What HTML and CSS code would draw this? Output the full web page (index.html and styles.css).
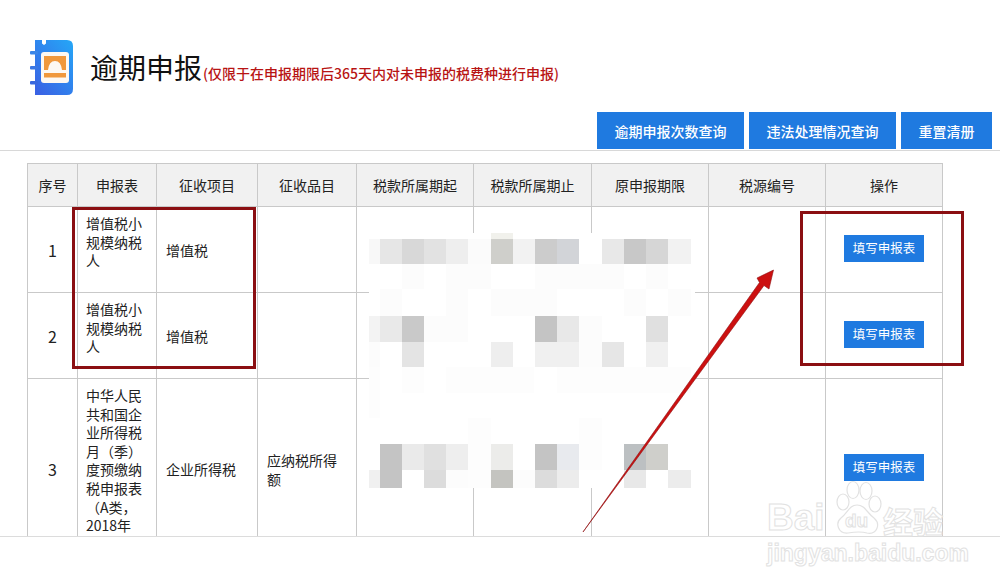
FILE: index.html
```html
<!DOCTYPE html>
<html lang="zh-CN">
<head>
<meta charset="utf-8">
<title>逾期申报</title>
<link rel="stylesheet" href="styles.css">
</head>
<body>
<div class="page">
  <header class="head">
    <svg class="logo" viewBox="0 0 46 60" width="46" height="60" aria-hidden="true">
      <defs>
        <linearGradient id="bookFill" x1="0.9" y1="0" x2="0.1" y2="1">
          <stop offset="0" stop-color="#26a4f6"/>
          <stop offset="1" stop-color="#3a62e4"/>
        </linearGradient>
      </defs>
      <path d="M5 2h7v3.500l2 1.500 2-1.500v-3.500h21q6 0 6 6v43q0 6-6 6h-32z" fill="url(#bookFill)"/>
      <rect x="0" y="13" width="8" height="3.500" rx="1" fill="#3b86e8"/>
      <rect x="0" y="28" width="8" height="3.500" rx="1" fill="#3b78e4"/>
      <rect x="0" y="43" width="8" height="3.500" rx="1" fill="#3a68de"/>
      <rect x="11" y="14" width="28" height="31" rx="3" fill="#fdf8f2"/>
      <path d="M14 18h22v14h-4q-1-9-7-9t-7 9h-4z" fill="#f0983c"/>
      <rect x="14" y="35" width="22" height="4.500" fill="#f0983c"/>
    </svg>
    <h1 class="title">逾期申报</h1>
    <span class="note">(仅限于在申报期限后365天内对未申报的税费种进行申报)</span>
  </header>

  <nav class="tools">
    <button class="tool tool-a">逾期申报次数查询</button>
    <button class="tool tool-a">违法处理情况查询</button>
    <button class="tool tool-b">重置清册</button>
  </nav>

  <main class="sheet">
    <table class="grid">
      <colgroup>
        <col class="c1"><col class="c2"><col class="c3"><col class="c4"><col class="c5"><col class="c6"><col class="c7"><col class="c8"><col class="c9">
      </colgroup>
      <thead>
        <tr>
          <th>序号</th><th>申报表</th><th>征收项目</th><th>征收品目</th><th>税款所属期起</th><th>税款所属期止</th><th>原申报期限</th><th>税源编号</th><th>操作</th>
        </tr>
      </thead>
      <tbody>
        <tr class="row-short">
          <td class="mid num">1</td>
          <td class="form">增值税小规模纳税人</td>
          <td>增值税</td><td></td><td></td><td></td><td></td><td></td>
          <td class="mid"><a class="fill">填写申报表</a></td>
        </tr>
        <tr class="row-short">
          <td class="mid num">2</td>
          <td class="form">增值税小规模纳税人</td>
          <td>增值税</td><td></td><td></td><td></td><td></td><td></td>
          <td class="mid"><a class="fill">填写申报表</a></td>
        </tr>
        <tr class="row-long">
          <td class="mid num">3</td>
          <td class="form">中华人民共和国企业所得税月（季）度预缴纳税申报表（A类，<br>2018年</td>
          <td>企业所得税</td><td>应纳税所得额</td><td></td><td></td><td></td><td></td>
          <td class="mid"><a class="fill">填写申报表</a></td>
        </tr>
      </tbody>
    </table>
  </main>
  <footer class="foot"></footer>

  <svg class="mosaic" viewBox="369 233 326 255" width="326" height="255" shape-rendering="crispEdges" aria-hidden="true">
    <rect x="369" y="233" width="326" height="255" fill="#fff"/>
    <rect x="491" y="233" width="22" height="6" fill="#f1f1ec"/>
    <g>
      <rect x="369" y="239" width="11" height="25" fill="#f8f8f8"/><rect x="380" y="239" width="22" height="25" fill="#e6e6e6"/><rect x="402" y="239" width="22" height="25" fill="#d8d8d8"/><rect x="424" y="239" width="22" height="25" fill="#e2e2e2"/><rect x="446" y="239" width="22" height="25" fill="#eeeeee"/><rect x="468" y="239" width="23" height="25" fill="#fbfbfb"/><rect x="491" y="239" width="22" height="25" fill="#cfcfcb"/><rect x="513" y="239" width="22" height="25" fill="#f2f2f2"/><rect x="535" y="239" width="22" height="25" fill="#cccccc"/><rect x="557" y="239" width="22" height="25" fill="#d2d4d8"/><rect x="602" y="239" width="22" height="25" fill="#e8e8e8"/><rect x="624" y="239" width="22" height="25" fill="#c8c8c8"/><rect x="646" y="239" width="22" height="25" fill="#d6d6d6"/><rect x="668" y="239" width="23" height="25" fill="#f2f2f2"/>
    </g>
    <g fill="#fcfcfc">
      <rect x="402" y="264" width="22" height="25"/><rect x="446" y="264" width="45" height="25"/><rect x="535" y="264" width="89" height="25"/><rect x="646" y="264" width="22" height="25"/>
      <rect x="380" y="289" width="22" height="27"/><rect x="446" y="289" width="22" height="27"/><rect x="491" y="289" width="66" height="27"/><rect x="624" y="289" width="22" height="27"/><rect x="668" y="289" width="23" height="27"/>
    </g>
    <g>
      <rect x="369" y="316" width="11" height="26" fill="#f3f3f3"/><rect x="380" y="316" width="22" height="26" fill="#e9e9e9"/><rect x="402" y="316" width="22" height="26" fill="#c9c9c9"/><rect x="424" y="316" width="44" height="26" fill="#fcfcfc"/><rect x="535" y="316" width="22" height="26" fill="#c4c4c4"/><rect x="557" y="316" width="22" height="26" fill="#e8e8e8"/><rect x="579" y="316" width="23" height="26" fill="#fcfcfc"/><rect x="646" y="316" width="22" height="26" fill="#e0e0e0"/>
      <rect x="369" y="342" width="11" height="25" fill="#fcfcfc"/><rect x="402" y="342" width="22" height="25" fill="#e4e4e4"/><rect x="491" y="342" width="22" height="25" fill="#eeeeee"/><rect x="535" y="342" width="44" height="25" fill="#f0f0f0"/><rect x="579" y="342" width="23" height="25" fill="#fcfcfc"/><rect x="602" y="342" width="22" height="25" fill="#e6e6e6"/><rect x="646" y="342" width="22" height="25" fill="#f0f0f0"/>
    </g>
    <g fill="#fdfdfd">
      <rect x="369" y="367" width="11" height="51"/><rect x="402" y="367" width="22" height="26"/><rect x="446" y="367" width="88" height="26"/><rect x="557" y="367" width="134" height="26"/>
      <rect x="468" y="418" width="23" height="70"/><rect x="579" y="418" width="23" height="52"/>
    </g>
    <g>
      <rect x="380" y="444" width="22" height="26" fill="#c4c4c4"/><rect x="402" y="444" width="22" height="26" fill="#eaeaea"/><rect x="424" y="444" width="22" height="26" fill="#e0e0e0"/><rect x="446" y="444" width="22" height="26" fill="#eeeeee"/><rect x="491" y="444" width="22" height="26" fill="#ececea"/><rect x="535" y="444" width="22" height="26" fill="#c4c4c4"/><rect x="557" y="444" width="22" height="26" fill="#e8eaee"/><rect x="624" y="444" width="22" height="26" fill="#bcc0c2"/><rect x="646" y="444" width="22" height="26" fill="#cfcfcb"/>
      <rect x="369" y="470" width="11" height="18" fill="#f0f0f0"/><rect x="380" y="470" width="22" height="18" fill="#c4c4c4"/><rect x="424" y="470" width="22" height="18" fill="#dcdcdc"/><rect x="446" y="470" width="22" height="18" fill="#fcfcfc"/><rect x="491" y="470" width="22" height="18" fill="#c4c4c0"/><rect x="513" y="470" width="22" height="18" fill="#fcfcfc"/><rect x="535" y="470" width="22" height="18" fill="#dcdcdc"/><rect x="557" y="470" width="22" height="18" fill="#ececec"/><rect x="624" y="470" width="22" height="18" fill="#e8e8e8"/><rect x="668" y="470" width="23" height="18" fill="#ececec"/>
    </g>
  </svg>

  <div class="mark mark-left"></div>
  <div class="mark mark-right"></div>

  <svg class="arrow" viewBox="0 0 1000 585" width="1000" height="585" aria-hidden="true">
    <path d="M583 532L759.500 282.500L757 278L773.500 270L769 289L764 285.500Z" fill="#cc1010" stroke="#8e0f10" stroke-width="0.6"/>
  </svg>

  <div class="wm" aria-hidden="true">
    <svg class="wm-paw" viewBox="0 0 56 56" width="56" height="56">
      <g fill="#fff" stroke="#e2e2e2" stroke-width="1.200">
        <ellipse cx="14" cy="22" rx="6" ry="8"/>
        <ellipse cx="24" cy="10" rx="6" ry="8.500"/>
        <ellipse cx="37" cy="11" rx="6" ry="8.500"/>
        <ellipse cx="46" cy="24" rx="6" ry="8"/>
        <path d="M28 25c-8 0-9 8-16 13-6 5-3 16 7 15 6-1 12-2 19 0 10 2 14-9 7-15-7-5-9-13-17-13z"/>
      </g>
    </svg>
    <span class="wm-bai">Bai</span>
    <span class="wm-du">du</span>
    <span class="wm-cn">经验</span>
    <span class="wm-url">jingyan.baidu.com</span>
  </div>
</div>
</body>
</html>
```

FILE: styles.css
```css
* { box-sizing: border-box; }

html, body {
  margin: 0;
  padding: 0;
  background: #fff;
}

body {
  font-family: "Liberation Sans", "Noto Sans CJK SC", sans-serif;
  color: #222;
}

.page {
  position: relative;
  width: 1000px;
  height: 585px;
  overflow: hidden;
  background: #fff;
  display: flex;
  flex-direction: column;
}

.head {
  height: 112px;
  flex: none;
  display: flex;
  align-items: flex-start;
  padding: 38px 0 0 30px;
}

.logo { flex: none; }

.title {
  margin: 8px 0 0 14px;
  font-family: "Noto Sans CJK SC", sans-serif;
  font-size: 28px;
  font-weight: 400;
  line-height: 42px;
  color: #111;
}

.note {
  margin: 23px 0 0 1px;
  font-size: 14px;
  line-height: 24px;
  font-weight: 500;
  font-family: "Noto Sans CJK SC", sans-serif;
  color: #b81414;
  white-space: nowrap;
}

.tools {
  height: 39px;
  flex: none;
  display: flex;
  justify-content: flex-end;
  gap: 5px;
  padding-right: 8px;
  border-bottom: 1px solid #d8d8d8;
}

.tool {
  height: 37px;
  padding: 0;
  border: 0;
  background: #1f7ae0;
  color: #fff;
  font-family: "Noto Sans CJK SC", sans-serif;
  font-size: 14px;
  font-weight: 500;
}

.tool-a { width: 147px; }
.tool-b { width: 91px; }

.sheet {
  height: 385px;
  flex: none;
  overflow: hidden;
  padding: 12px 0 0 27px;
}

.grid {
  width: 916px;
  table-layout: fixed;
  border-collapse: collapse;
  font-family: "Noto Sans CJK SC", sans-serif;
  font-size: 14px;
  text-spacing-trim: space-all;
}

.c1 { width: 50px; }
.c2 { width: 79px; }
.c3 { width: 101px; }
.c4 { width: 99px; }
.c5 { width: 117px; }
.c6 { width: 118px; }
.c7 { width: 117px; }
.c8 { width: 117px; }
.c9 { width: 117px; }

.grid th,
.grid td {
  border: 1px solid #c9c9c9;
}

.grid th {
  height: 43px;
  padding: 0;
  background: #f1f1f1;
  font-weight: 400;
  color: #222;
}

.grid td {
  padding: 2px 9px 0;
  line-height: 18.600px;
  vertical-align: middle;
  word-break: break-all;
}

.row-short td { height: 86px; }
.row-long td { height: 180px; }

.grid td.mid { text-align: center; padding: 2px 0 0; }

.grid td.num { font-size: 16px; }

.grid td.form {
  vertical-align: top;
  padding: 7px 8px 0;
}

.fill {
  display: inline-block;
  vertical-align: middle;
  width: 80px;
  height: 27px;
  margin-bottom: 5px;
  background: #1f7ae0;
  color: #fff;
  font-size: 12.500px;
  line-height: 26px;
  text-align: center;
}

.foot {
  flex: 1;
  border-top: 1px solid #dcdcdc;
  background: #fff;
  position: relative;
}

.mosaic {
  position: absolute;
  left: 369px;
  top: 233px;
}

.arrow {
  position: absolute;
  left: 0;
  top: 0;
  pointer-events: none;
}

.mark {
  position: absolute;
  border: 3px solid #8b0f12;
}

.mark-left {
  left: 72px;
  top: 207px;
  width: 184px;
  height: 162px;
}

.mark-right {
  left: 800px;
  top: 211px;
  width: 164px;
  height: 155px;
}

.wm {
  position: absolute;
  left: 766px;
  top: 478px;
  width: 190px;
  height: 88px;
  color: #fff;
  -webkit-text-stroke: 1px #e2e2e2;
  font-family: "Liberation Sans", sans-serif;
  font-weight: 700;
}

.wm-paw {
  position: absolute;
  left: 63px;
  top: 2px;
}

.wm-bai {
  position: absolute;
  left: 1px;
  top: 20px;
  font-size: 37px;
  line-height: 40px;
}

.wm-du {
  position: absolute;
  left: 79px;
  top: 33px;
  font-size: 19px;
  line-height: 20px;
}

.wm-cn {
  position: absolute;
  left: 117px;
  top: 26px;
  font-family: "Noto Sans CJK SC", sans-serif;
  font-size: 30px;
  line-height: 32px;
}

.wm-url {
  position: absolute;
  left: 1px;
  top: 62px;
  font-size: 23px;
  font-weight: 700;
  line-height: 26px;
  white-space: nowrap;
}
```
